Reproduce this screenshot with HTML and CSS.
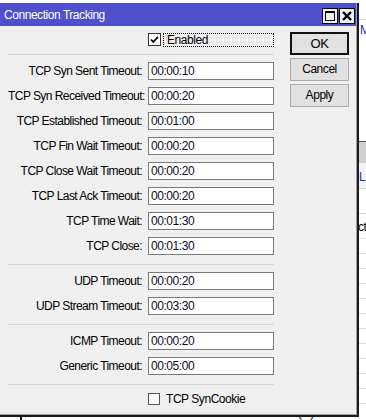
FILE: index.html
```html
<!DOCTYPE html>
<html>
<head>
<meta charset="utf-8">
<link rel="stylesheet" href="styles.css">
</head>
<body>
<div class="desk">
  <div class="d-top"></div>
  <div class="d-mrow"><span class="d-m">M</span></div>
  <div class="d-gap"></div>
  <div class="d-head"></div>
  <div class="d-sel"><span class="d-l">L</span></div>
  <div class="d-line"></div>
  <div class="d-ct"><span>ct</span></div>
  <div class="d-grid">
    <div></div><div></div><div></div><div></div><div></div><div></div><div></div><div></div><div></div><div></div><div></div>
  </div>
  <div class="d-bottom">
    <span class="d-vbar"></span><span class="d-vline"></span>
    <span class="d-t1">10.1.0.11:60453</span><span class="d-t2">00:00:17.000 00</span><span class="d-t3">0 (...)</span>
  </div>
</div>

<div class="dialog">
  <div class="titlebar">
    <span class="title">Connection Tracking</span>
    <div class="tbtns">
      <span class="tbtn"><svg width="14" height="14" viewBox="0 0 14 14"><rect x="2.5" y="2.5" width="9" height="9" fill="none" stroke="#000" stroke-width="1"/><rect x="2" y="2" width="10" height="2" fill="#000"/></svg></span>
      <span class="tbtn"><svg width="14" height="14" viewBox="0 0 14 14"><path d="M3 3 L11 11 M11 3 L3 11" stroke="#000" stroke-width="2.4" fill="none"/></svg></span>
    </div>
  </div>
  <div class="body">
    <div class="form">
      <div class="enabled-row">
        <span class="check"><svg width="11" height="11" viewBox="0 0 11 11"><path d="M2 5.5 L4.3 8 L9 2.8" stroke="#000" stroke-width="1.8" fill="none"/></svg></span>
        <span class="focus">Enabled</span>
      </div>
      <div class="sep first"></div>
      <div class="group">
        <div class="row"><span class="lbl">TCP Syn Sent Timeout:</span><span class="field">00:00:10</span></div>
        <div class="row"><span class="lbl">TCP Syn Received Timeout:</span><span class="field">00:00:20</span></div>
        <div class="row"><span class="lbl">TCP Established Timeout:</span><span class="field">00:01:00</span></div>
        <div class="row"><span class="lbl">TCP Fin Wait Timeout:</span><span class="field">00:00:20</span></div>
        <div class="row"><span class="lbl">TCP Close Wait Timeout:</span><span class="field">00:00:20</span></div>
        <div class="row"><span class="lbl">TCP Last Ack Timeout:</span><span class="field">00:00:20</span></div>
        <div class="row"><span class="lbl">TCP Time Wait:</span><span class="field">00:01:30</span></div>
        <div class="row"><span class="lbl">TCP Close:</span><span class="field">00:01:30</span></div>
      </div>
      <div class="sep"></div>
      <div class="group">
        <div class="row"><span class="lbl">UDP Timeout:</span><span class="field">00:00:20</span></div>
        <div class="row"><span class="lbl">UDP Stream Timeout:</span><span class="field">00:03:30</span></div>
      </div>
      <div class="sep"></div>
      <div class="group">
        <div class="row"><span class="lbl">ICMP Timeout:</span><span class="field">00:00:20</span></div>
        <div class="row"><span class="lbl">Generic Timeout:</span><span class="field">00:05:00</span></div>
      </div>
      <div class="sep"></div>
      <div class="cookie-row">
        <span class="check"></span>
        <span class="cookie-text">TCP SynCookie</span>
      </div>
    </div>
    <div class="buttons">
      <div class="btn default">OK</div>
      <div class="btn">Cancel</div>
      <div class="btn">Apply</div>
    </div>
  </div>
</div>
</body>
</html>
```

FILE: styles.css
```css
* { box-sizing: border-box; margin: 0; padding: 0; }
html, body { width: 366px; height: 420px; overflow: hidden; background: #fff; }
body {
  position: relative;
  font-family: "Liberation Sans", Arial, sans-serif;
  font-size: 12px;
  letter-spacing: -0.45px;
  color: #000;
}

/* background window */
.desk { width: 366px; height: 420px; display: flex; flex-direction: column; overflow: hidden; }
.d-top { height: 20px; border-bottom: 1px solid #d4d4d4; flex: none; }
.d-mrow { height: 20px; flex: none; padding-left: 360px; line-height: 20px; white-space: nowrap; overflow: hidden; }
.d-m { color: #1a2fb8; font-size: 12px; }
.d-gap { height: 101px; flex: none; }
.d-head { height: 22px; flex: none; background: #cfcfcf; border-top: 1px solid #555; }
.d-sel { height: 26px; flex: none; background: #f4f4f4; padding-left: 359px; line-height: 28px; border-bottom: 1px solid #d8d8d8; }
.d-l { color: #1a2fb8; }
.d-line { height: 25px; flex: none; border-bottom: 1px solid #d8d8d8; }
.d-ct { height: 25px; flex: none; padding-left: 358px; line-height: 26px; border-bottom: 1px solid #e4e4e4; }
.d-grid { flex: none; display: flex; flex-direction: column; }
.d-grid div { height: 15px; border-bottom: 1px solid #dcdcdc; }
.d-bottom { flex: none; height: 30px; display: flex; align-items: flex-start; padding-top: 2px; white-space: nowrap; }
.d-vbar { width: 2px; height: 30px; background: #000; margin-left: 20px; }
.d-vline { width: 1px; height: 30px; background: #ddd; margin-left: 3px; }
.d-t1 { margin-left: 29px; width: 116px; }
.d-t2 { width: 118px; }

/* dialog window */
.dialog {
  position: absolute;
  left: 0;
  top: 3px;
  width: 359px;
  height: 414px;
  border-right: 2px solid #1c1c1c;
  border-bottom: 2px solid #1c1c1c;
  display: flex;
  flex-direction: column;
  background: #f0f0f0;
}
.titlebar {
  height: 23px;
  flex: none;
  background: #5050cc;
  display: flex;
  align-items: center;
  justify-content: space-between;
  padding-left: 4px;
  border-right: 1px solid #8a8ad8;
}
.title { color: #fff; font-size: 12px; }
.tbtns { display: flex; gap: 1px; margin-right: 1px; margin-top: 2px; }
.tbtn {
  width: 16px; height: 16px;
  background: #f0f0f0;
  border: 1px solid #000;
  display: flex; align-items: center; justify-content: center;
}
.tbtn svg { display: block; }

.body {
  flex: 1;
  display: flex;
  border-right: 1px solid #a0a0a0;
  border-bottom: 1px solid #a0a0a0;
}
.form { width: 274px; padding-left: 8px; display: flex; flex-direction: column; }
.enabled-row { margin-top: 7px; height: 13px; display: flex; align-items: center; padding-left: 140px; }
.check {
  width: 13px; height: 13px; flex: none;
  background: #fff;
  border: 1px solid #333;
  display: flex; align-items: center; justify-content: center;
}
.check svg { display: block; }
.focus {
  margin-left: 2px;
  width: 112px; height: 14px;
  border: 1px dotted #000;
  line-height: 12px;
  padding-left: 3px;
}
.sep { height: 1px; background: #d9d9d9; margin-top: 9px; margin-bottom: 7px; }
.sep.first { margin-top: 8px; }
.group { display: flex; flex-direction: column; gap: 7px; }
.row { display: flex; align-items: center; height: 18px; }
.lbl { width: 135px; text-align: right; white-space: nowrap; letter-spacing: -0.55px; padding-right: 1px; }
.field {
  margin-left: 5px;
  width: 126px; height: 18px;
  background: #fff;
  border: 1px solid #7a7a7a;
  line-height: 16px;
  padding-left: 2px;
  color: #0c0c28;
}
.cookie-row { margin-top: 1px; display: flex; align-items: center; padding-left: 140px; height: 12px; }
.cookie-row .check { width: 12px; height: 12px; border-color: #555; }
.cookie-text { margin-left: 6px; }

.buttons { margin-left: 16px; margin-top: 6px; display: flex; flex-direction: column; gap: 3px; }
.btn {
  width: 59px; height: 23px;
  background: #e1e1e1;
  border: 1px solid #adadad;
  text-align: center;
  line-height: 21px;
}
.btn.default { border: 2px solid #111; line-height: 19px; font-size: 13px; }
```
